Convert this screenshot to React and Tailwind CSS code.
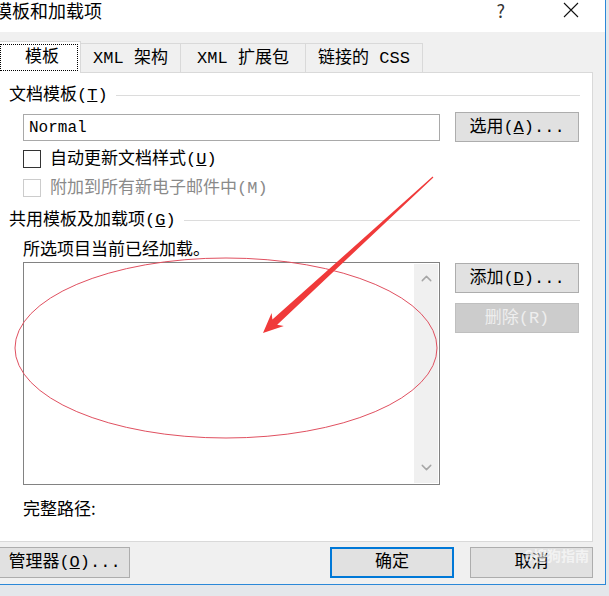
import { ChevronUp, ChevronDown } from "lucide-react";

const ui = { fontFamily: '"Liberation Mono", "Noto Sans CJK SC", monospace' };
const sans = { fontFamily: '"Noto Sans CJK SC", "Noto Sans", sans-serif' };

function Btn({ children, className = "", disabled = false }) {
	return (
		<div
			className={`flex items-center justify-center h-[30px] border text-[17px] leading-none ${
				disabled
					? "bg-[#cccccc] border-[#bfbfbf] text-[#eeeeee]"
					: "bg-[#e1e1e1] border-[#adadad] text-black"
			} ${className}`}
			style={ui}
		>
			{children}
		</div>
	);
}

function Heading({ children, className = "" }) {
	return (
		<div className={`flex items-center gap-2 pl-[9px] pr-[12px] h-[20px] ${className}`}>
			<span className="text-[17px] leading-none whitespace-nowrap" style={ui}>
				{children}
			</span>
			<div className="flex-1 h-px bg-[#dcdcdc]" />
		</div>
	);
}

function Check({ label, disabled }) {
	return (
		<div className="flex items-center h-[18px] pl-[23px] gap-[9px]">
			<div
				className={`w-[18px] h-[18px] bg-white border ${
					disabled ? "border-[#cccccc]" : "border-[#333333]"
				}`}
			/>
			<span
				className={`text-[17px] leading-none ${disabled ? "text-[#8a8a8a]" : "text-black"}`}
				style={ui}
			>
				{label}
			</span>
		</div>
	);
}

export default function App() {
	const tabs = ["XML 架构", "XML 扩展包", "链接的 CSS"];
	const tabWidths = ["w-[100px]", "w-[125px]", "w-[117px]"];

	return (
		<div className="relative w-[609px] h-[596px] overflow-hidden bg-[#e4e7eb]">
			<div className="flex flex-col w-[606px] h-[585px] bg-[#f0f0f0] border-r border-b border-[#2b88d8]">
				{/* title bar */}
				<div className="flex items-start h-[32px] bg-white shrink-0 pt-[1px]">
					<span className="ml-[-6px] text-[18px] leading-[18px]" style={sans}>
						模板和加载项
					</span>
					<span className="ml-auto mr-[58px] text-[18px] leading-[18px] text-[#333]" style={sans}>
						?
					</span>
					<svg width="16" height="16" viewBox="0 0 16 16" className="mr-[26px] mt-[1px]">
						<path d="M1 1 L15 15 M15 1 L1 15" stroke="#111" strokeWidth="1.1" />
					</svg>
				</div>

				{/* tabs */}
				<div className="flex items-end h-[39px] mt-[1px] shrink-0">
					<div className="relative z-10 w-[81px] h-[32px] -mb-px bg-white border-t border-r border-[#d9d9d9] flex items-center justify-end pr-[2px]">
						<span
							className="w-[80px] h-[27px] pl-[6px] flex items-center justify-center text-[17px] leading-none border border-dotted border-black"
							style={ui}
						>
							模板
						</span>
					</div>
					{tabs.map((t, i) => (
						<div
							key={t}
							className={`${tabWidths[i]} h-[29px] border-t border-r border-[#d9d9d9] flex items-center justify-center`}
						>
							<span className="text-[17px] leading-none" style={ui}>
								{t}
							</span>
						</div>
					))}
				</div>

				{/* panel */}
				<div className="flex flex-col w-[594px] h-[470px] ml-[-1px] bg-white border border-[#d9d9d9]">
					<Heading className="mt-[12px]">文档模板(<u>T</u>)</Heading>
					<div className="flex items-start mt-[7px] pl-[23px]">
						<div className="w-[417px] h-[27px] mt-[2px] border border-[#a9a9a9] flex items-center pl-[5px]">
							<span className="text-[16px] leading-none" style={ui}>
								Normal
							</span>
						</div>
						<Btn className="w-[124px] ml-[15px]">
							选用(<u>A</u>)...
						</Btn>
					</div>
					<div className="mt-[8px]">
						<Check label={<>自动更新文档样式(<u>U</u>)</>} />
					</div>
					<div className="mt-[11px]">
						<Check label="附加到所有新电子邮件中(M)" disabled />
					</div>
					<Heading className="mt-[13px]">共用模板及加载项(<u>G</u>)</Heading>
					<div className="mt-[7px] pl-[23px] h-[20px] flex items-center">
						<span className="text-[17px] leading-none" style={sans}>
							所选项目当前已经加载。
						</span>
					</div>
					<div className="flex items-start mt-[5px] pl-[23px]">
						<div className="flex w-[417px] h-[223px] border border-[#828282] bg-white">
							<div className="flex-1" />
							<div className="w-[24px] my-[1px] mr-[1px] bg-[#f0f0f0] flex flex-col items-center justify-between pt-[6px] pb-[7px]">
								<ChevronUp size={17} strokeWidth={2} color="#a6a6a6" />
								<ChevronDown size={17} strokeWidth={2} color="#a6a6a6" />
							</div>
						</div>
						<div className="flex flex-col gap-[10px] ml-[15px] mt-px">
							<Btn className="w-[124px]">
								添加(<u>D</u>)...
							</Btn>
							<Btn className="w-[124px]" disabled>
								删除(R)
							</Btn>
						</div>
					</div>
					<div className="mt-[12px] pl-[23px] h-[20px] flex items-center">
						<span className="text-[17px] leading-none" style={sans}>
							完整路径:
						</span>
					</div>
				</div>

				{/* bottom buttons */}
				<div className="flex items-start mt-[5px]">
					<Btn className="w-[131px] h-[31px] ml-[-1px]">
						管理器(<u>O</u>)...
					</Btn>
					<div className="ml-[200px] w-[124px] h-[31px] border-2 border-[#0078d7] bg-[#e1e1e1] flex items-center justify-center">
						<span className="text-[17px] leading-none" style={ui}>
							确定
						</span>
					</div>
					<div className="relative ml-[16px]">
						<Btn className="w-[123px] h-[31px]">取消</Btn>
						<span
							className="absolute right-[4px] top-[1px] text-[14px] leading-none text-white/60 font-bold"
							style={sans}
						>
							S搜狗指南
						</span>
					</div>
				</div>
			</div>

			{/* red annotation */}
			<svg
				className="absolute left-0 top-0 pointer-events-none"
				width="609"
				height="596"
				viewBox="0 0 609 596"
			>
				<ellipse cx="226" cy="348" rx="211" ry="90" fill="none" stroke="#e05060" strokeWidth="1" />
				<polygon
					points="433.4,177.4 277.2,324.8 283.8,326.1 263,333 271.6,312.9 272.4,319.6 432.6,176.6"
					fill="#f03a3a"
				/>
			</svg>
		</div>
	);
}
